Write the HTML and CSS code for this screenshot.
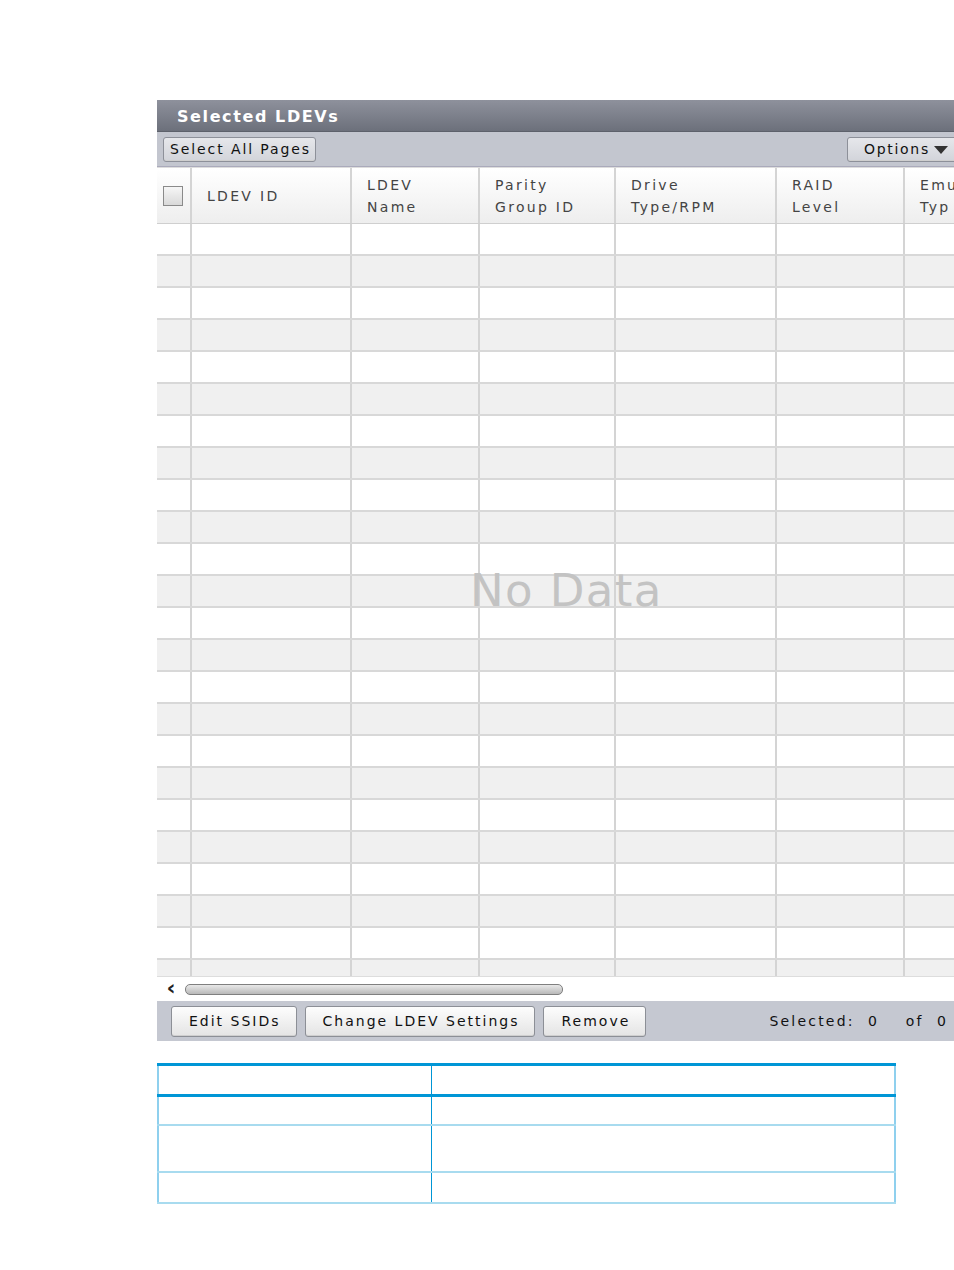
FILE: index.html
```html
<!DOCTYPE html>
<html lang="en">
<head>
    <meta charset="UTF-8">
    <title>Selected LDEVs</title>
    <link rel="stylesheet" href="styles.css">
</head>
<body>

    <div class="page">
        <div class="panel">
            <div class="panel-title">Selected LDEVs</div>

            <div class="toolbar">
                <button class="btn btn-small">Select All Pages</button>
                <button class="btn btn-small btn-options">Options <span class="caret"></span></button>
            </div>

            <div class="grid">
                <div class="grid-head">
                    <div class="cell c0"><span class="checkbox"></span></div>
                    <div class="cell c1">LDEV ID</div>
                    <div class="cell c2">LDEV<br>Name</div>
                    <div class="cell c3">Parity<br>Group ID</div>
                    <div class="cell c4">Drive<br>Type/RPM</div>
                    <div class="cell c5">RAID<br>Level</div>
                    <div class="cell c6">Emu<br>Typ</div>
                </div>
                <div class="grid-body" id="grid-body">
                    <div class="no-data">No Data</div>
                </div>
                <div class="hscroll">
                    <span class="arrow">&#8249;</span>
                    <span class="thumb"></span>
                </div>
            </div>

            <div class="footer">
                <button class="btn">Edit SSIDs</button>
                <button class="btn">Change LDEV Settings</button>
                <button class="btn">Remove</button>
                <div class="count">Selected:&nbsp;&nbsp;0&nbsp;&nbsp;&nbsp;&nbsp;of&nbsp;&nbsp;0</div>
            </div>
        </div>

        <table class="info">
            <tr class="info-head"><td class="left"></td><td></td></tr>
            <tr class="r1"><td class="left"></td><td></td></tr>
            <tr class="r2"><td class="left"></td><td></td></tr>
            <tr class="r3"><td class="left"></td><td></td></tr>
        </table>
    </div>

    <script>
        // fill empty striped rows
        let body = document.getElementById("grid-body");
        for (let i = 0; i < 24; i++) {
            let row = document.createElement("div");
            row.className = "grid-row" + (i % 2 ? " odd" : "");
            for (let c = 0; c < 7; c++) {
                row.innerHTML += `<div class="cell c${c}"></div>`;
            }
            body.appendChild(row);
        }
    </script>

</body>
</html>
```

FILE: styles.css
```css
body {
    margin: 0;
    padding: 0;
    background: #fff;
    font-family: "DejaVu Sans", Verdana, sans-serif;
    overflow: hidden;
}
.page {
    padding: 100px 0 0 157px;
}
.panel {
    width: 797px;
    overflow: hidden;
}
.panel-title {
    height: 31px;
    line-height: 33px;
    padding-left: 20px;
    background: linear-gradient(#8e919c, #6c707b);
    color: #fff;
    font-weight: bold;
    font-size: 16px;
    letter-spacing: 1.6px;
    border-bottom: 1px solid #5d616b;
}
.toolbar {
    height: 35px;
    background: #c3c6cf;
    display: flex;
    align-items: center;
    justify-content: space-between;
    padding: 0 0 0 6px;
    border-bottom: 1px solid #aab;
    width: 797px;
    box-sizing: border-box;
}
.btn {
    font-family: "DejaVu Sans", Verdana, sans-serif;
    font-size: 14px;
    letter-spacing: 2px;
    color: #111;
    background: linear-gradient(#fdfdfd, #e4e4e4);
    border: 1px solid #8c8f96;
    border-radius: 3px;
    height: 31px;
    padding: 0 15px 0 17px;
    box-shadow: inset 0 -1px 0 #cfcfcf;
}
.btn-small {
    height: 25px;
    padding: 0 4px 0 6px;
    letter-spacing: 1.9px;
    background: linear-gradient(#e6e7eb, #d2d4da);
    border-color: #8d9099;
}
.btn-options {
    width: 112px;
    margin-right: -5px;
    padding: 0 0 0 16px;
    text-align: left;
    letter-spacing: 1.7px;
    white-space: nowrap;
}
.caret {
    display: inline-block;
    width: 0;
    height: 0;
    margin-left: -2px;
    border-left: 7px solid transparent;
    border-right: 7px solid transparent;
    border-top: 8px solid #333;
    vertical-align: middle;
}
.grid {
    width: 797px;
    background: #fff;
}
.grid-head, .grid-row {
    display: flex;
}
.grid-head {
    height: 55px;
    background: linear-gradient(#ffffff, #eeeeee);
    border-top: 1px solid #ddd;
    border-bottom: 1px solid #cfcfcf;
    font-size: 14px;
    letter-spacing: 2.3px;
    color: #444;
    line-height: 22px;
}
.grid-head .cell {
    display: flex;
    align-items: center;
    padding-left: 15px;
}
.grid-head .c0 {
    padding-left: 6px;
}
.cell {
    border-right: 2px solid #d4d4d4;
    flex-shrink: 0;
    box-sizing: border-box;
}
.c0 { width: 35px; }
.c1 { width: 160px; }
.c2 { width: 128px; }
.c3 { width: 136px; }
.c4 { width: 161px; }
.c5 { width: 128px; }
.c6 { width: 60px; border-right: none; overflow: hidden; }
.checkbox {
    width: 20px;
    height: 20px;
    border: 1px solid #8a8a8a;
    background: linear-gradient(#f6f6f6, #d9d9d9);
    box-sizing: border-box;
}
.grid-body {
    height: 752px;
    overflow: hidden;
    position: relative;
}
.grid-row {
    height: 32px;
    border-bottom: 2px solid #d8d8d8;
    box-sizing: border-box;
    background: #fff;
}
.grid-row.odd {
    background: #f0f0f0;
}
.no-data {
    position: absolute;
    left: 313px;
    top: 340px;
    font-size: 45px;
    color: #c3c3c3;
    letter-spacing: 1.4px;
    z-index: 2;
}
.hscroll {
    height: 25px;
    display: flex;
    align-items: center;
    border-top: 1px solid #ddd;
    box-sizing: border-box;
}
.arrow {
    font-size: 22px;
    font-weight: bold;
    color: #222;
    width: 28px;
    text-align: center;
    line-height: 20px;
    margin-top: -3px;
}
.thumb {
    width: 376px;
    height: 9px;
    border: 1px solid #7f7f7f;
    border-radius: 5px;
    background: linear-gradient(#e8e8e8, #b9b9b9);
}
.footer {
    width: 797px;
    height: 40px;
    box-sizing: border-box;
    background: #c5c8d1;
    display: flex;
    align-items: center;
    padding: 0 0 0 14px;
    gap: 8px;
}
.footer .btn {
    height: 31px;
}
.count {
    margin-left: auto;
    font-size: 14px;
    letter-spacing: 2.2px;
    color: #111;
    padding-right: 6px;
}
.info {
    margin-top: 22px;
    width: 739px;
    border-collapse: collapse;
    border-top: 3px solid #0096d6;
    border-left: 2px solid #8fd0ee;
    border-right: 2px solid #8fd0ee;
    border-bottom: 2px solid #a8dbef;
}
.info td {
    padding: 0;
    border-bottom: 2px solid #a8dbef;
}
.info td.left {
    width: 272px;
    border-right: 1px solid #0096d6;
}
.info-head td {
    height: 28px;
    border-bottom: 3px solid #0096d6;
}
.r1 td { height: 27px; }
.r2 td { height: 45px; }
.r3 td { height: 29px; }
```
